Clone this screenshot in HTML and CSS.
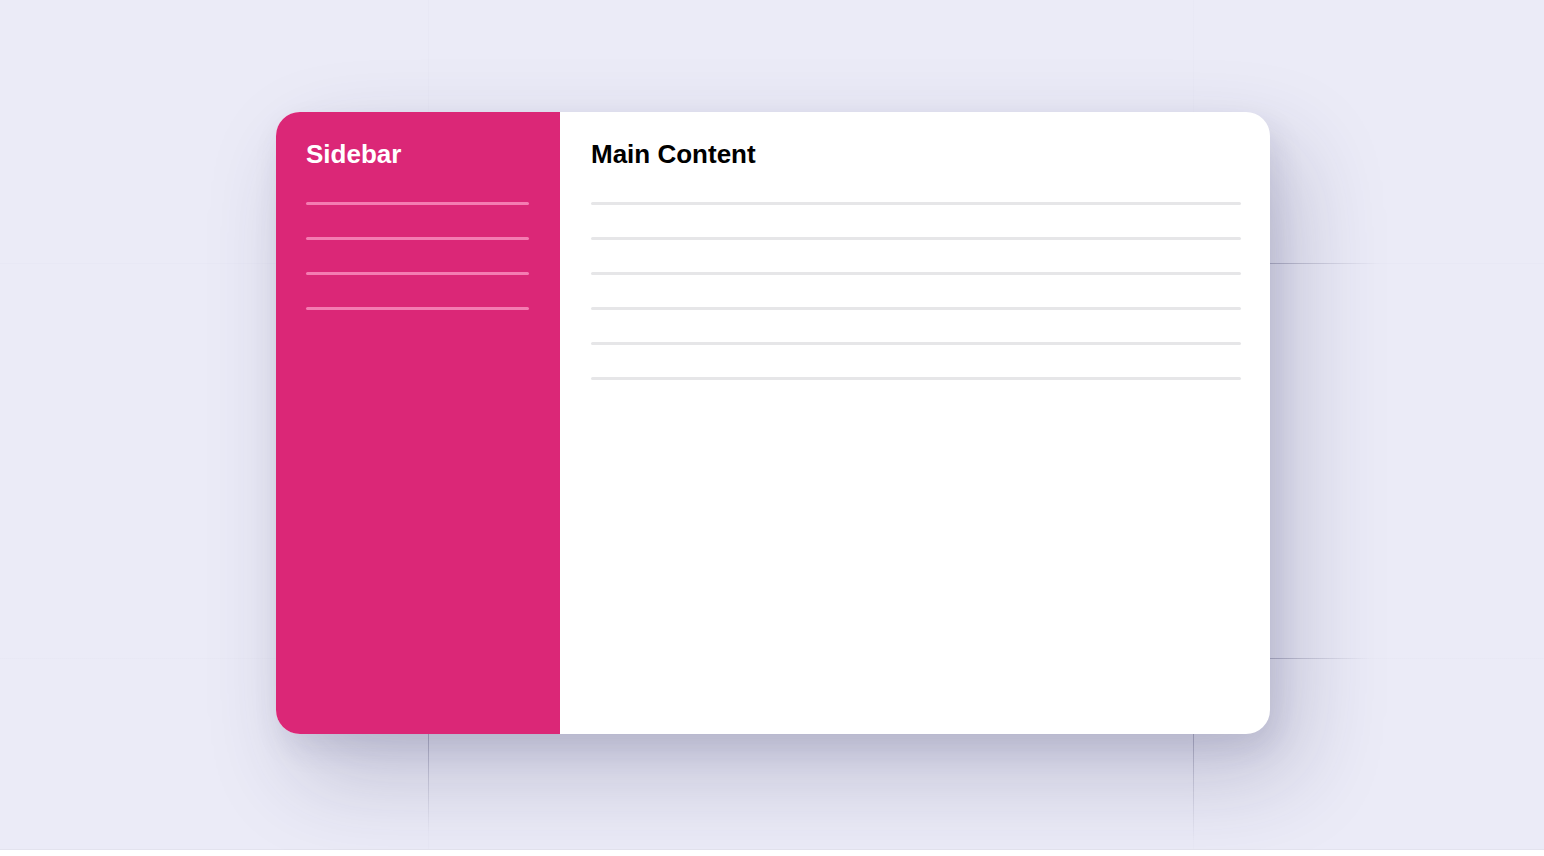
FILE: index.html
```html
<!DOCTYPE html>
<html lang="en">
<head>
<meta charset="utf-8">
<title>Sidebar layout</title>
<link rel="stylesheet" href="styles.css">
</head>
<body>
<div class="stage">
  <div class="card">
    <aside class="sidebar">
      <h2 class="title title-light">Sidebar</h2>
      <div class="lines">
        <div class="line line-pink"></div>
        <div class="line line-pink"></div>
        <div class="line line-pink"></div>
        <div class="line line-pink"></div>
      </div>
    </aside>
    <main class="main">
      <h2 class="title">Main Content</h2>
      <div class="lines">
        <div class="line"></div>
        <div class="line"></div>
        <div class="line"></div>
        <div class="line"></div>
        <div class="line"></div>
        <div class="line"></div>
      </div>
    </main>
  </div>
</div>
</body>
</html>
```

FILE: styles.css
```css
html, body {
  margin: 0;
  padding: 0;
  background: #ffffff;
}

body {
  font-family: "Liberation Sans", Arial, Helvetica, sans-serif;
}

.stage {
  height: 850px;
  box-sizing: border-box;
  padding: 112px 0 0 276px;
  border-bottom: 1px solid #e3e3ee;
  background-color: #ebebf7;
  background-image:
    linear-gradient(to right, rgba(90, 90, 120, 0.35), rgba(90, 90, 120, 0)),
    linear-gradient(to right, rgba(90, 90, 120, 0.35), rgba(90, 90, 120, 0)),
    linear-gradient(to bottom, rgba(90, 90, 120, 0.35), rgba(90, 90, 120, 0)),
    linear-gradient(to bottom, rgba(90, 90, 120, 0.35), rgba(90, 90, 120, 0)),
    linear-gradient(rgba(60, 60, 110, 0.015), rgba(60, 60, 110, 0.015)),
    linear-gradient(rgba(60, 60, 110, 0.015), rgba(60, 60, 110, 0.015)),
    linear-gradient(rgba(60, 60, 110, 0.015), rgba(60, 60, 110, 0.015)),
    linear-gradient(rgba(60, 60, 110, 0.015), rgba(60, 60, 110, 0.015));
  background-repeat: no-repeat;
  background-size:
    110px 1px,
    100px 1px,
    1px 100px,
    1px 108px,
    100% 1px,
    100% 1px,
    1px 100%,
    1px 100%;
  background-position:
    1270px 263px,
    1270px 658px,
    428px 734px,
    1193px 734px,
    0 263px,
    0 658px,
    428px 0,
    1193px 0;
}

.card {
  display: flex;
  width: 994px;
  height: 622px;
  border-radius: 24px;
  overflow: hidden;
  background: #ffffff;
  box-shadow:
    24px 40px 90px 2px rgba(40, 40, 90, 0.22),
    6px 14px 30px rgba(40, 40, 90, 0.10);
}

.sidebar {
  width: 284px;
  flex: none;
  box-sizing: border-box;
  padding: 27px 31px 30px 30px;
  background: #db2777;
}

.main {
  flex: 1;
  box-sizing: border-box;
  padding: 27px 29px 30px 31px;
}

.title {
  margin: 0 0 33px;
  font-size: 26px;
  line-height: 30px;
  font-weight: 700;
  color: #000000;
}

.title-light {
  color: #ffffff;
}

.lines {
  display: flex;
  flex-direction: column;
  gap: 32px;
}

.line {
  height: 3px;
  border-radius: 2px;
  background: #e6e6e8;
}

.line-pink {
  background: #f47cb2;
}
```
